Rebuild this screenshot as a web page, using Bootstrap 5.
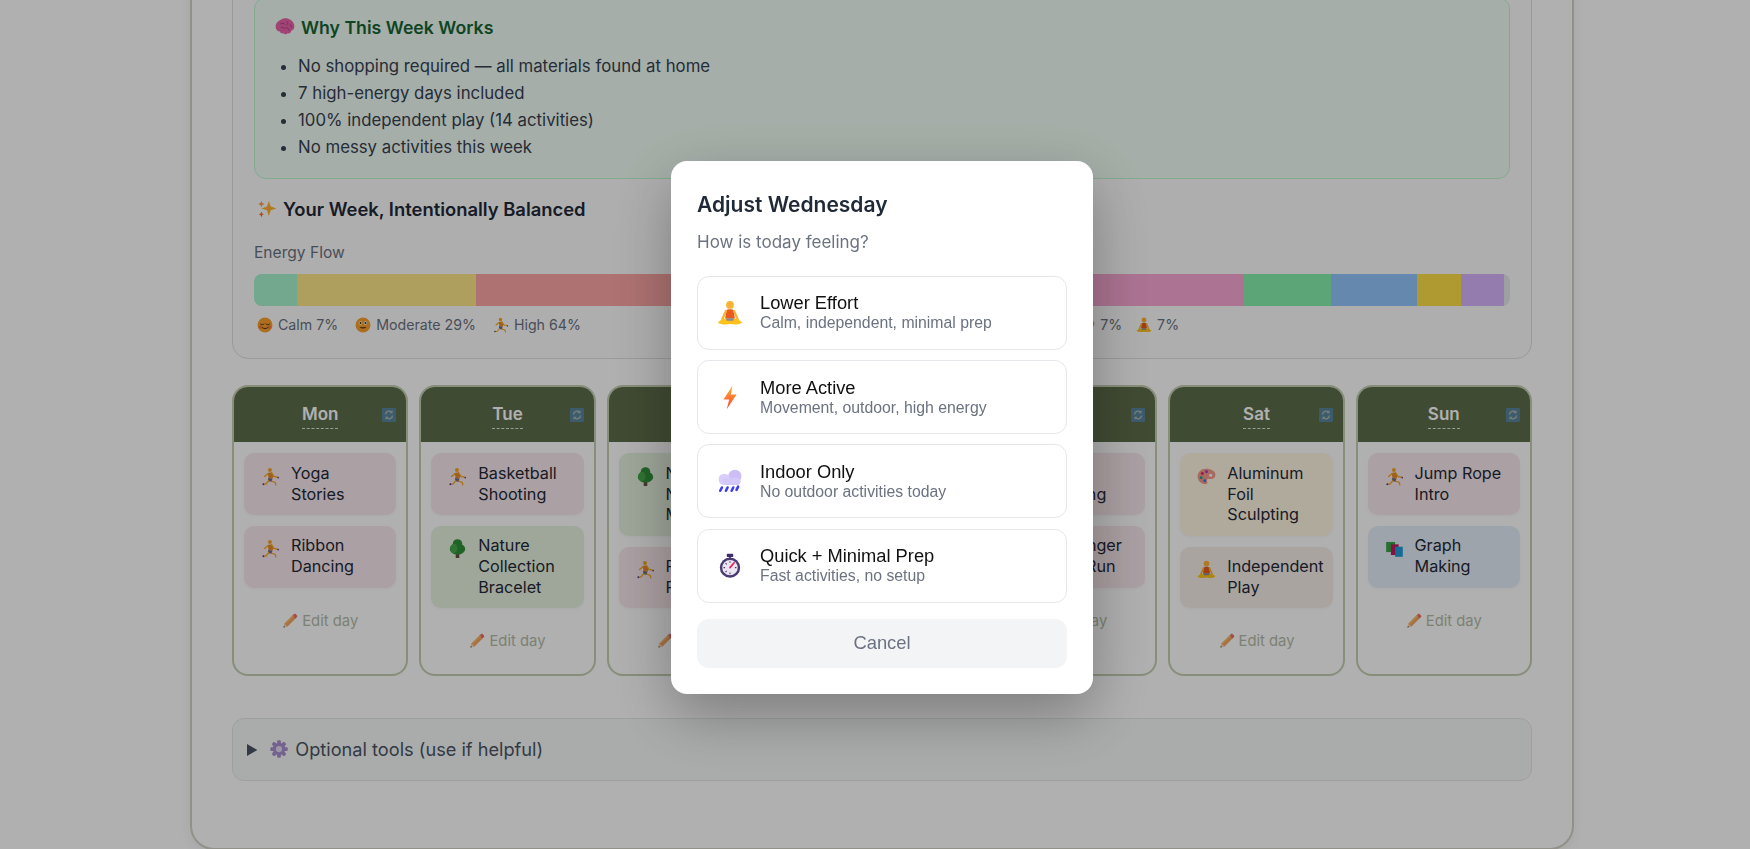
<!DOCTYPE html>
<html lang="en">
<head>
<meta charset="utf-8">
<title>Adjust Wednesday</title>
<link href="https://cdn.jsdelivr.net/npm/bootstrap@5.3.0/dist/css/bootstrap.min.css" rel="stylesheet">
<style>
html,body{height:849px;overflow:hidden;background:#fff}
body{font-family:Inter,"Noto Sans",sans-serif;color:#1f2937;width:1764px}
.pg-shell{width:1384px;margin:0 auto;padding:0 40px 67px;border:2px solid #d2d3c8;border-top:0;border-radius:0 0 24px 24px;box-shadow:0 4px 12px rgba(0,0,0,.06)}
.week-box{border:1px solid #dcdfe3;border-radius:16px;padding:25.5px 21px 23px;margin-bottom:26px;margin-top:-30px;background:#fdfdfd}
.why-box{background:#f0fdf4;border:1px solid #bbf7d0;border-radius:12px;padding:16px 20px 17px}
.why-title{font-size:17.7px;line-height:27px;font-weight:600;color:#166534;margin:0 0 12px}
.why-list{font-size:16.8px;line-height:27.2px;color:#374151;margin:0;padding-left:23px}
.bal-title{font-size:18.4px;line-height:27px;font-weight:600;margin:16.5px 0 19px 3px;color:#1f2937}
.flow-label{font-size:15.6px;line-height:21px;color:#6b7280;margin-bottom:11.5px}
.flow-bar{height:32px;border-radius:8px;overflow:hidden;background:#e5e7eb}
.flow-legend{font-size:14.2px;line-height:20px;color:#6b7280;margin:9px 0 0 3px}
.flow-legend svg{width:16px;height:16px;vertical-align:-3px;margin-right:5px}
.first-group{gap:17px}
.second-group{margin-left:304px;gap:14px}
.day-grid{display:grid;grid-template-columns:repeat(7,1fr);gap:10.8px;margin-bottom:42px}
.day-col{border:2px solid #c4cfb2;border-radius:16px;overflow:hidden}
.day-head{background:#5e6d4a;height:55px;position:relative;text-align:center;padding-top:15px}
.day-name{color:#fff;font-size:17px;line-height:25px;font-weight:600;border-bottom:1px dashed rgba(255,255,255,.8);display:inline-block;padding-bottom:1px}
.swap-badge{position:absolute;right:10px;top:21px;width:14px;height:14px;opacity:.6}
.day-body{padding:11px 10px 22px}
.act{display:flex;border-radius:10px;padding:9.5px 2px 10.5px 12px;font-size:16.2px;line-height:20.8px;color:#1f2937;margin-bottom:11px;box-shadow:0 1px 3px rgba(0,0,0,.04)}
.act .slot{flex:0 0 29px;text-align:center;margin-right:6px;padding-top:4px}
.act .slot svg{width:19px;height:19px;display:inline-block;vertical-align:top}
.a-phys{background:#f8e8ec}.a-nat{background:#e6f1df}.a-art{background:#fff6e3}.a-calm{background:#f6eeea}.a-learn{background:#e4eef8}
.edit-day{font-size:14.8px;line-height:21px;color:#b4bba8;text-align:center;margin-top:23px}
.edit-day svg{width:16px;height:16px;vertical-align:-3px;margin-right:4px}
.opt-box{background:#f6f9f8;border:1px solid #e5e7eb;border-radius:12px;padding:17px 14px;font-size:18.2px;line-height:27px;color:#4b5563}
.opt-box svg{width:20px;height:20px;vertical-align:-3px;margin:0 6px 0 3px}
.dim-layer{position:fixed;left:0;top:0;width:1764px;height:849px;background:rgba(0,0,0,.31);display:flex;align-items:center;justify-content:center;padding-top:6px}
.adjust-sheet{width:422px;background:#fff;border-radius:16px;padding:29px 26px 26px;box-shadow:0 20px 60px rgba(0,0,0,.3)}
.sheet-title{font-size:21px;line-height:30px;font-weight:600;color:#1f2937;margin:0 0 10px}
.sheet-sub{font-size:17px;line-height:24px;color:#6b7280;margin:0 0 21.5px}
.opt-btn{display:flex;align-items:center;width:100%;background:#fff;border:1px solid #e5e7eb;border-radius:12px;padding:0 18px;height:74px;margin-bottom:10.3px;text-align:left;font-family:"Liberation Sans",Arial,sans-serif}
.opt-btn svg{flex:0 0 26px;width:26px;height:26px;margin:0 17px 0 1px}
.opt-name{font-size:18.3px;line-height:20px;color:#111;display:block}
.opt-desc{font-size:15.8px;line-height:19px;color:#6b7280;display:block}
.cancel-btn{display:block;width:100%;height:49px;margin-top:16px;background:#f3f4f6;border:0;border-radius:12px;color:#6b7280;font-family:"Liberation Sans",Arial,sans-serif;font-size:18.4px}
</style>
</head>
<body>
<svg width="0" height="0" style="position:absolute" aria-hidden="true">
<defs>
<linearGradient id="boltg" x1="0" y1="0" x2="0" y2="1"><stop offset="0" stop-color="#ffb02e"/><stop offset="1" stop-color="#f8453a"/></linearGradient>
<symbol id="i-run" viewBox="0 0 32 32"><circle cx="15" cy="5" r="3.400" fill="#f5a623"/><path d="M11 10l7-1 3 6-2 5-6-1z" fill="#e98a2b"/><path d="M12 18l7 2-1 5-6-1z" fill="#6f6f80"/><path d="M12 11L6 16M18 10l4 6 6 1M13 23l-5 6-4 0M18 24l6 2 1 4" fill="none" stroke="#f5a623" stroke-width="2.200" stroke-linecap="round" stroke-linejoin="round"/><circle cx="4" cy="29" r="1.600" fill="#5a3f8c"/><circle cx="29" cy="18" r="1.400" fill="#5a3f8c"/></symbol>
<symbol id="i-tree" viewBox="0 0 32 32"><rect x="13" y="24" width="6" height="8" fill="#6d4c41"/><ellipse cx="16" cy="8" rx="8" ry="7.500" fill="#2f8f3a"/><ellipse cx="16" cy="17" rx="13" ry="9.500" fill="#2f8f3a"/><ellipse cx="10" cy="16" rx="6" ry="8" fill="#46a84a"/></symbol>
<symbol id="i-pencil" viewBox="0 0 32 32"><path d="M3 29l2-8L22 4l6 6-17 17z" fill="#f4a261"/><path d="M3 29l2-8 6 6z" fill="#f8d7b5"/><path d="M3 29l.8-3.200 2.400 2.400z" fill="#444"/><path d="M21 5l3-3c1-1 2-1 3 0l3 3c1 1 1 2 0 3l-3 3z" fill="#ef6a6a"/><path d="M6 20L22 4l2 2L8 22z" fill="#f9c06b"/></symbol>
<symbol id="i-palette" viewBox="0 0 32 32"><path d="M15 3C7 3 1 9 1 16s6 13 13 13c4 0 4-3 3-5-1-3 1-5 4-4 5 1 10-1 10-7C31 7 24 3 15 3z" fill="#f49a8c"/><circle cx="23" cy="14" r="2.600" fill="#fff"/><circle cx="9" cy="11" r="2.500" fill="#e0246e"/><circle cx="16" cy="8" r="2.500" fill="#a93cc9"/><circle cx="7" cy="18" r="2.500" fill="#20a08a"/><circle cx="13" cy="23" r="2.500" fill="#3a7be0"/></symbol>
<symbol id="i-med" viewBox="0 0 32 32"><circle cx="16" cy="6" r="4.800" fill="#f9b233"/><path d="M11.500 12.500c1-1.500 8-1.500 9 0l1.500 10.500H10z" fill="#ea5a1f"/><path d="M11 13.500L6.500 24M21 13.500l4.500 10.500" stroke="#f9b233" stroke-width="2.800" stroke-linecap="round"/><path d="M1 28c3-4.500 9-6 15-5 6-1 12 .5 15 5-4 2.500-10 2.500-15 1.500C11 30.500 5 30.500 1 28z" fill="#fcc21b"/><rect x="11.500" y="22.500" width="9" height="3" rx="1" fill="#8a8a96"/></symbol>
<symbol id="i-books" viewBox="0 0 32 32"><rect x="2" y="5" width="15" height="17" fill="#37a447"/><rect x="10" y="9" width="13" height="18" fill="#c2185b"/><rect x="17" y="13" width="13" height="17" fill="#1f9bd7"/></symbol>
<symbol id="i-bolt" viewBox="0 0 32 32"><path d="M19 2L8 19h7l-3 12 12-18h-7z" fill="url(#boltg)"/></symbol>
<symbol id="i-rain" viewBox="0 0 32 32"><circle cx="22" cy="10" r="8" fill="#cdbdf7"/><circle cx="9" cy="14" r="7" fill="#d9cefb"/><rect x="7" y="12" width="22" height="9" rx="4.500" fill="#d3c8fa"/><path d="M6 24l-2 4M13 24l-2 4M20 24l-2 4M26 23l-2 4" stroke="#3f3ff0" stroke-width="3.200" stroke-linecap="round"/></symbol>
<symbol id="i-watch" viewBox="0 0 32 32"><rect x="12" y="1" width="8" height="4" rx="1" fill="#3f2d6b"/><rect x="15" y="4" width="2" height="4" fill="#3f2d6b"/><circle cx="16" cy="18" r="12.500" fill="#4a3a72"/><circle cx="16" cy="18" r="9.500" fill="#ece6f2"/><path d="M16 18l5-6" stroke="#e8265e" stroke-width="2.200" stroke-linecap="round"/><path d="M16 10v2M8 18h2M16 24v2M22 18h2M10.500 12.500l1.500 1.500M10.500 23.500l1.500-1.500" stroke="#4a3a72" stroke-width="1.300"/></symbol>
<symbol id="i-gear" viewBox="0 0 32 32"><g fill="#a98ed0"><circle cx="16" cy="16" r="10"/><g id="t"><rect x="13" y="2" width="6" height="6" rx="2"/><rect x="13" y="24" width="6" height="6" rx="2"/><rect x="2" y="13" width="6" height="6" rx="2"/><rect x="24" y="13" width="6" height="6" rx="2"/></g><use href="#t" transform="rotate(45 16 16)"/></g><circle cx="16" cy="16" r="5" fill="#e3daf2"/></symbol>
<symbol id="i-spark" viewBox="0 0 32 32"><path d="M19 3l3 9 9 3-9 3-3 9-3-9-9-3 9-3z" fill="#ffb02e"/><path d="M7 3l1.500 3.500L12 8 8.500 9.500 7 13 5.500 9.500 2 8l3.500-1.500z" fill="#ff9a3d"/><path d="M7 20l1.300 3L11 24.500 8.300 26 7 29l-1.300-3L3 24.500 5.700 23z" fill="#f8712b"/></symbol>
<symbol id="i-brain" viewBox="0 0 32 32"><path d="M10 4c4-3 10-2 14 0 4 2 7 6 7 11 0 4-3 6-5 7 0 3-3 5-6 4-1 2-5 2-6 0-3 1-6-1-6-3-4 0-7-3-7-8 0-5 4-9 9-11z" fill="#e763a8"/><path d="M9 11c3-2 6-1 7 1M19 7c2 2 2 4 0 6M24 12c2 1 3 3 2 5M10 17c2-1 5 0 6 2M18 17c2 0 4 1 4 4" fill="none" stroke="#b53a80" stroke-width="1.400" stroke-linecap="round"/></symbol>
<symbol id="i-relief" viewBox="0 0 32 32"><circle cx="16" cy="16" r="15" fill="#f9a12e"/><path d="M7 14c2 2 5 2 7 0M18 14c2 2 5 2 7 0" fill="none" stroke="#5a3510" stroke-width="2" stroke-linecap="round"/><path d="M10 21c3 3 9 3 12 0" fill="none" stroke="#5a3510" stroke-width="2" stroke-linecap="round"/><circle cx="7" cy="20" r="3.500" fill="#f0604a" opacity=".6"/><circle cx="25" cy="20" r="3.500" fill="#f0604a" opacity=".6"/></symbol>
<symbol id="i-smile" viewBox="0 0 32 32"><circle cx="16" cy="16" r="15" fill="#f9a12e"/><circle cx="11" cy="12" r="3.500" fill="#fff"/><circle cx="21" cy="12" r="3.500" fill="#fff"/><circle cx="11" cy="12" r="2" fill="#402808"/><circle cx="21" cy="12" r="2" fill="#402808"/><path d="M9 20c3 4 11 4 14 0z" fill="#7a4310"/></symbol>
<symbol id="i-swap" viewBox="0 0 32 32"><rect width="32" height="32" rx="3" fill="#5596d6"/><path d="M8 15a8 8 0 0 1 14-5M24 17a8 8 0 0 1-14 5" fill="none" stroke="#e6eef7" stroke-width="3"/><path d="M24 5v7h-7zM8 27v-7h7z" fill="#e6eef7"/></symbol>
</defs>
</svg>

<div class="pg-shell">
  <div class="week-box">
    <div class="why-box">
      <h3 class="why-title"><svg width="20" height="20" style="vertical-align:-3px;margin-right:6px"><use href="#i-brain"/></svg>Why This Week Works</h3>
      <ul class="why-list">
        <li>No shopping required — all materials found at home</li>
        <li>7 high-energy days included</li>
        <li>100% independent play (14 activities)</li>
        <li>No messy activities this week</li>
      </ul>
    </div>
    <h3 class="bal-title"><svg width="20" height="20" style="vertical-align:-3px;margin-right:6px"><use href="#i-spark"/></svg>Your Week, Intentionally Balanced</h3>
    <div class="flow-label">Energy Flow</div>
    <div class="flow-bar d-flex">
      <div style="width:3.42%;background:#a7f3d0"></div>
      <div style="width:14.25%;background:#fde68a"></div>
      <div style="width:30.57%;background:#fca5a5"></div>
      <div style="width:30.57%;background:#f9a8d4"></div>
      <div style="width:6.93%;background:#86efac"></div>
      <div style="width:6.85%;background:#93c5fd"></div>
      <div style="width:3.5%;background:#fde047"></div>
      <div style="width:3.42%;background:#d8b4fe"></div>
    </div>
    <div class="flow-legend d-flex">
      <div class="d-flex first-group">
        <span><svg><use href="#i-relief"/></svg>Calm 7%</span>
        <span><svg><use href="#i-smile"/></svg>Moderate 29%</span>
        <span><svg><use href="#i-run"/></svg>High 64%</span>
      </div>
      <div class="d-flex second-group">
        <span><svg><use href="#i-run"/></svg>50%</span>
        <span><svg><use href="#i-tree"/></svg>14%</span>
        <span><svg><use href="#i-books"/></svg>14%</span>
        <span><svg><use href="#i-palette"/></svg>7%</span>
        <span><svg><use href="#i-med"/></svg>7%</span>
      </div>
    </div>
  </div>

  <div class="day-grid">
    <div class="day-col"><div class="day-head"><span class="day-name">Mon</span><svg class="swap-badge"><use href="#i-swap"/></svg></div><div class="day-body">
      <div class="act a-phys"><span class="slot"><svg><use href="#i-run"/></svg></span><span>Yoga<br>Stories</span></div>
      <div class="act a-phys"><span class="slot"><svg><use href="#i-run"/></svg></span><span>Ribbon Dancing</span></div>
      <div class="edit-day"><svg><use href="#i-pencil"/></svg>Edit day</div></div></div>
    <div class="day-col"><div class="day-head"><span class="day-name">Tue</span><svg class="swap-badge"><use href="#i-swap"/></svg></div><div class="day-body">
      <div class="act a-phys"><span class="slot"><svg><use href="#i-run"/></svg></span><span>Basketball Shooting</span></div>
      <div class="act a-nat"><span class="slot"><svg><use href="#i-tree"/></svg></span><span>Nature Collection Bracelet</span></div>
      <div class="edit-day"><svg><use href="#i-pencil"/></svg>Edit day</div></div></div>
    <div class="day-col"><div class="day-head"><span class="day-name">Wed</span><svg class="swap-badge"><use href="#i-swap"/></svg></div><div class="day-body">
      <div class="act a-nat"><span class="slot"><svg><use href="#i-tree"/></svg></span><span>Nature<br>Number<br>Match</span></div>
      <div class="act a-phys"><span class="slot"><svg><use href="#i-run"/></svg></span><span>Paper<br>Planes</span></div>
      <div class="edit-day"><svg><use href="#i-pencil"/></svg>Edit day</div></div></div>
    <div class="day-col"><div class="day-head"><span class="day-name">Thu</span><svg class="swap-badge"><use href="#i-swap"/></svg></div><div class="day-body">
      <div class="act a-phys"><span class="slot"><svg><use href="#i-run"/></svg></span><span>Balance<br>Walk</span></div>
      <div class="act a-phys"><span class="slot"><svg><use href="#i-run"/></svg></span><span>Obstacle<br>Course</span></div>
      <div class="edit-day"><svg><use href="#i-pencil"/></svg>Edit day</div></div></div>
    <div class="day-col"><div class="day-head"><span class="day-name">Fri</span><svg class="swap-badge"><use href="#i-swap"/></svg></div><div class="day-body">
      <div class="act a-phys"><span class="slot"><svg><use href="#i-run"/></svg></span><span>Animal<br>Jumping</span></div>
      <div class="act a-phys"><span class="slot"><svg><use href="#i-run"/></svg></span><span>Scavenger<br>Relay Run</span></div>
      <div class="edit-day"><svg><use href="#i-pencil"/></svg>Edit day</div></div></div>
    <div class="day-col"><div class="day-head"><span class="day-name">Sat</span><svg class="swap-badge"><use href="#i-swap"/></svg></div><div class="day-body">
      <div class="act a-art"><span class="slot"><svg><use href="#i-palette"/></svg></span><span>Aluminum<br>Foil<br>Sculpting</span></div>
      <div class="act a-calm"><span class="slot"><svg><use href="#i-med"/></svg></span><span>Independent Play</span></div>
      <div class="edit-day"><svg><use href="#i-pencil"/></svg>Edit day</div></div></div>
    <div class="day-col"><div class="day-head"><span class="day-name">Sun</span><svg class="swap-badge"><use href="#i-swap"/></svg></div><div class="day-body">
      <div class="act a-phys"><span class="slot"><svg><use href="#i-run"/></svg></span><span>Jump Rope<br>Intro</span></div>
      <div class="act a-learn"><span class="slot"><svg><use href="#i-books"/></svg></span><span>Graph<br>Making</span></div>
      <div class="edit-day"><svg><use href="#i-pencil"/></svg>Edit day</div></div></div>
  </div>

  <details class="opt-box"><summary><svg><use href="#i-gear"/></svg>Optional tools (use if helpful)</summary></details>
</div>

<div class="dim-layer">
  <div class="adjust-sheet">
    <h2 class="sheet-title">Adjust Wednesday</h2>
    <p class="sheet-sub">How is today feeling?</p>
    <button class="opt-btn"><svg><use href="#i-med"/></svg><span><span class="opt-name">Lower Effort</span><span class="opt-desc">Calm, independent, minimal prep</span></span></button>
    <button class="opt-btn"><svg><use href="#i-bolt"/></svg><span><span class="opt-name">More Active</span><span class="opt-desc">Movement, outdoor, high energy</span></span></button>
    <button class="opt-btn"><svg><use href="#i-rain"/></svg><span><span class="opt-name">Indoor Only</span><span class="opt-desc">No outdoor activities today</span></span></button>
    <button class="opt-btn"><svg><use href="#i-watch"/></svg><span><span class="opt-name">Quick + Minimal Prep</span><span class="opt-desc">Fast activities, no setup</span></span></button>
    <button class="cancel-btn">Cancel</button>
  </div>
</div>
<script src="https://cdn.jsdelivr.net/npm/bootstrap@5.3.0/dist/js/bootstrap.bundle.min.js"></script>
</body>
</html>
